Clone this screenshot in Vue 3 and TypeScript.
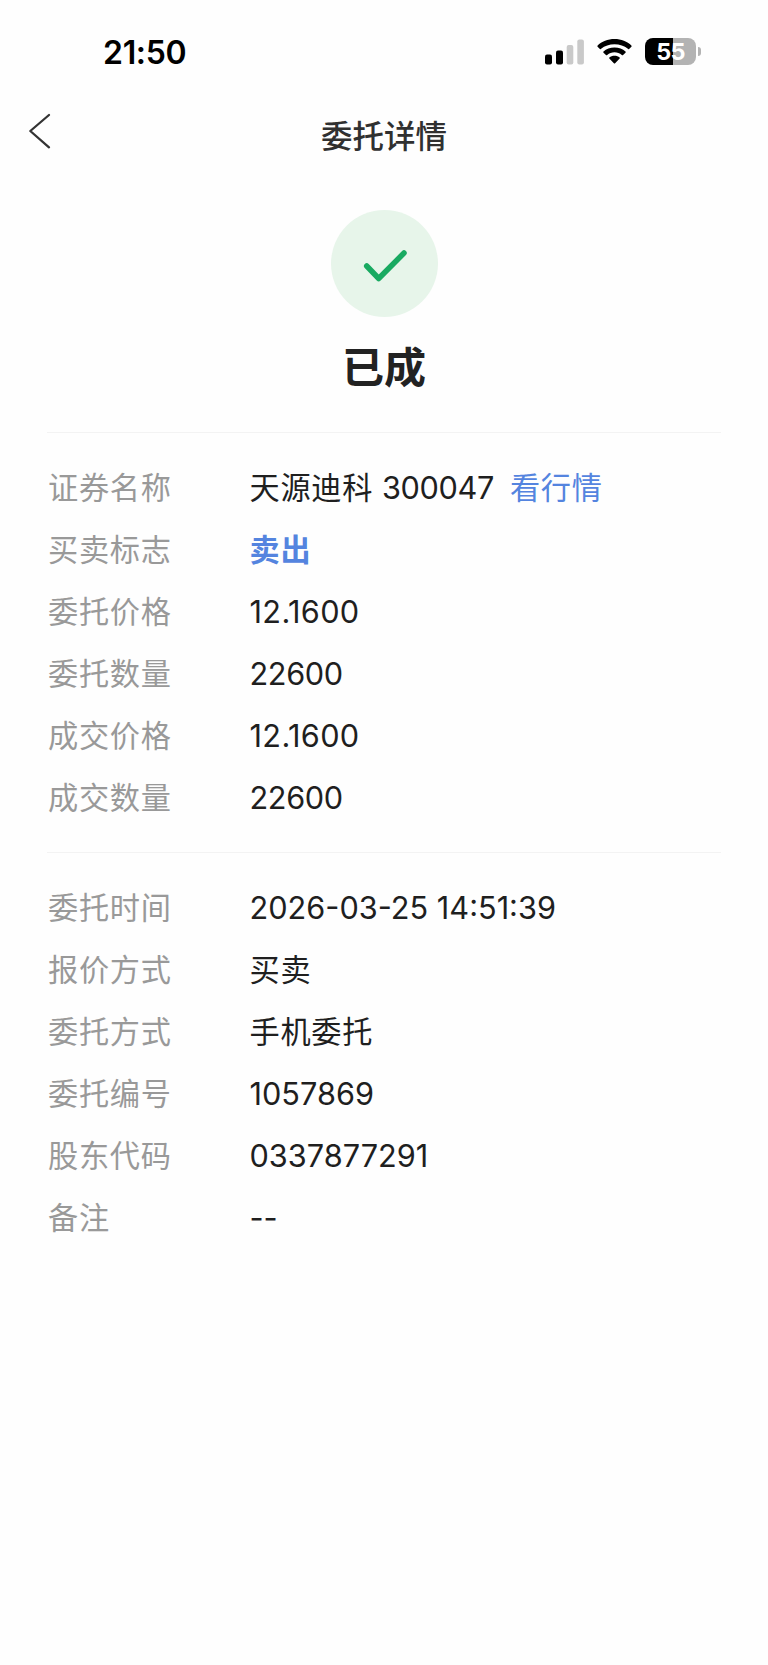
<script setup lang="ts">
interface Row { label: string; value: string; kind?: string; link?: string; code?: string }
const order: Row[] = [
  { label: '证券名称', value: '天源迪科', code: '300047', link: '看行情' },
  { label: '买卖标志', value: '卖出', kind: 'sell' },
  { label: '委托价格', value: '12.1600', kind: 'price' },
  { label: '委托数量', value: '22600', kind: 'number' },
  { label: '成交价格', value: '12.1600', kind: 'price' },
  { label: '成交数量', value: '22600', kind: 'number' },
]
const meta: Row[] = [
  { label: '委托时间', value: '2026-03-25 14:51:39', kind: 'date' },
  { label: '报价方式', value: '买卖' },
  { label: '委托方式', value: '手机委托' },
  { label: '委托编号', value: '1057869', kind: 'date' },
  { label: '股东代码', value: '0337877291', kind: 'date' },
  { label: '备注', value: '--', kind: 'date' },
]
const groups: Row[][] = [order, meta]
</script>

<template>
  <main class="screen">
    <div class="status">
      <span class="time">21:50</span>
      <div class="indicators">
        <svg class="signal" width="40" height="26" viewBox="0 0 40 26">
          <rect x="1" y="15.5" width="7" height="10" rx="2" />
          <rect x="12" y="11.500" width="7" height="14" rx="2" />
          <rect class="dim" x="22.700" y="6" width="6.600" height="19.500" rx="2" />
          <rect class="dim" x="33.300" y="0.500" width="6.600" height="25" rx="2" />
        </svg>
        <svg class="wifi" width="35" height="25" viewBox="0 0 34 25" preserveAspectRatio="none">
          <path d="M17 0C10.500 0 4.500 2.500 0.600 6.500Q0 7.200 0.600 7.800L2.800 9.900Q3.400 10.400 4 9.800C7.500 6.800 12 5.200 17 5.200S26.500 6.800 30 9.800Q30.600 10.400 31.200 9.900L33.400 7.800Q34 7.200 33.400 6.500C29.500 2.500 23.500 0 17 0Z" />
          <path d="M17 8.500C12.800 8.500 9 10 6.300 12.600Q5.800 13.200 6.300 13.700L8.700 16Q9.300 16.400 9.900 15.900C11.900 14.200 14.300 13.300 17 13.300S22.100 14.200 24.100 15.900Q24.700 16.400 25.300 16L27.700 13.700Q28.200 13.200 27.700 12.600C25 10 21.200 8.500 17 8.500Z" />
          <path d="M17 16.700C15 16.700 13.300 17.300 12 18.400Q11.500 18.900 12 19.400L16.400 24.200Q17 24.700 17.600 24.200L22 19.400Q22.500 18.900 22 18.400C20.700 17.300 19 16.700 17 16.700Z" />
        </svg>
        <div class="battery"><span>55</span></div>
        <i class="cap"></i>
      </div>
    </div>
    <header class="nav">
      <svg class="back" width="24" height="38" viewBox="0 0 24 38"><path d="M22 2L3.300 18L22 34.300" /></svg>
      <h1>委托详情</h1>
    </header>
    <section class="result">
      <div class="circle"><svg width="107" height="107" viewBox="0 0 107 107"><path d="M35.700 56L47.700 68.500L73 43" /></svg></div>
      <h2>已成</h2>
    </section>
    <dl v-for="(rows, i) in groups" :key="i" class="group">
      <div v-for="row in rows" :key="row.label" class="row">
        <dt>{{ row.label }}</dt>
        <dd :class="row.kind">{{ row.value }}<span v-if="row.code" class="number code">{{ row.code }}</span><a v-if="row.link">{{ row.link }}</a></dd>
      </div>
    </dl>
  </main>
</template>

<style>
body { margin: 0; background: #fefefe; }
</style>
<style scoped>
.screen { width: 768px; height: 1665px; box-sizing: border-box; background: #fefefe; font-family: Inter, "Noto Sans CJK SC", sans-serif; color: #1f1f1f; overflow: hidden; }
.status { height: 104px; display: flex; justify-content: space-between; box-sizing: border-box; padding: 34px 67px 0 103px; }
.time { font-size: 32px; line-height: 38px; font-weight: 600; letter-spacing: -.3px; color: #000; }
.indicators { display: flex; height: 35px; align-items: center; }
.wifi { margin-left: 13px; }
.dim { fill: #c9c9c9; }
.battery { box-sizing: border-box; margin-left: 13px; width: 51px; height: 27px; border-radius: 8px; background: linear-gradient(90deg, #000 55%, #b3b3b3 55%); color: #fff; font-size: 23.500px; font-weight: 700; line-height: 28px; letter-spacing: -.7px; text-align: center; }
.cap { width: 3px; height: 9px; margin-left: 2px; border-radius: 0 3px 3px 0; background: #b3b3b3; }
.nav { height: 106px; display: grid; grid-template-columns: 80px 1fr 80px; }
.back { margin: 9px 0 0 27px; }
.back path { fill: none; stroke: #333; stroke-width: 2.300; stroke-linecap: round; stroke-linejoin: round; }
h1 { margin: 9px 0 0; font-size: 31.500px; line-height: 48px; font-weight: 500; text-align: center; color: #303030; }
.result { height: 222px; display: flex; flex-direction: column; align-items: center; }
.circle { width: 107px; height: 107px; border-radius: 50%; background: #e7f5ea; }
.circle svg { display: block; }
.circle path { fill: none; stroke: #19aa61; stroke-width: 5.500; stroke-linecap: round; stroke-linejoin: round; }
h2 { margin: 20px 0 0; font-size: 42px; line-height: 62px; font-weight: 700; color: #222; }
.group { margin: 0 47px; border-top: 1px solid #f3f3f3; padding: 23.600px 0 22.800px; }
.row { height: 62.100px; display: flex; align-items: baseline; font-size: 30.200px; line-height: 62px; letter-spacing: .7px; white-space: nowrap; }
dt { width: 201.500px; padding-left: 1px; color: #999; }
dd { margin: 0; }
dd a { color: #5484df; margin-left: 16px; }
.number, .price, .date { font-size: 30.700px; }
.number { letter-spacing: -.4px; }
.price { letter-spacing: .35px; }
.date { letter-spacing: 0; }
.code { margin-left: 9px; }
.sell { color: #5484df; font-weight: 700; }
</style>
